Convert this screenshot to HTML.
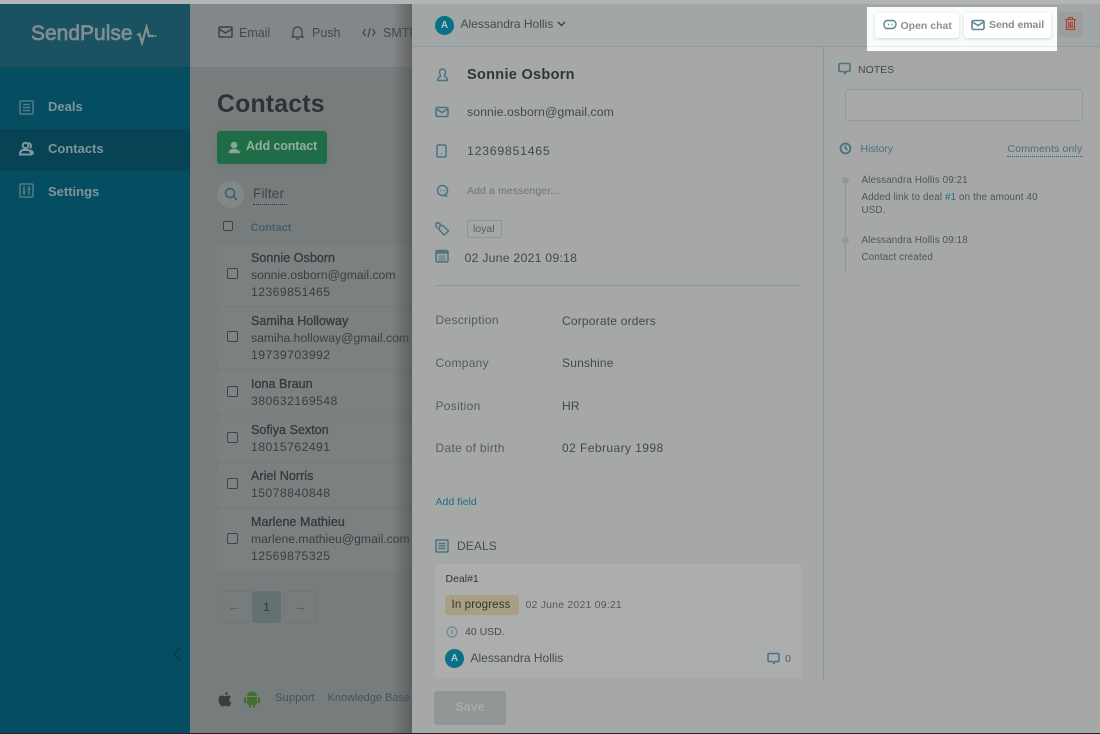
<!DOCTYPE html>
<html><head><meta charset="utf-8"><style>
html,body{margin:0;padding:0;width:1100px;height:734px;overflow:hidden;background:#b4b4b4}
body{position:relative;font-family:"Liberation Sans",sans-serif;color:#3f4344}
div,svg{position:absolute}
.t{position:absolute;white-space:nowrap;line-height:20px;height:20px;font-size:12px}
svg{fill:none;stroke:#44707f;stroke-width:1.5}
.row{left:217px;width:195px;background:#7c8080;border-radius:4px}
.cb{position:absolute;left:227px;width:9px;height:9px;border:1px solid #3c4446;border-radius:2px;background:#7e8383}
.rt{left:251px;font-size:12.2px;color:#393e40;letter-spacing:0}
.rd{letter-spacing:.45px}
.rn{font-size:12.5px;color:#34393b;-webkit-text-stroke:.3px #34393b;letter-spacing:.05px}
.side{left:48px;font-size:13px;font-weight:bold;color:#7f959b}
.lab{left:435.500px;font-size:12px;color:#565a5b;letter-spacing:.3px}
.val{left:562px;font-size:12px;color:#44484a;letter-spacing:.2px}
.hist{font-size:9.800px;color:#505455;letter-spacing:.15px}
.av{border-radius:50%;background:#0a7086;color:#b0c6cb;font-weight:bold;font-size:10px;text-align:center;width:19px;height:19px;line-height:19px}
.btn{background:#fff;border-radius:3px;box-shadow:0 1px 3px rgba(120,140,140,.35)}
</style></head><body>
<div style="left:0;top:4px;width:190px;height:729px;background:#054d60"></div>
<div style="left:0;top:4px;width:190px;height:63px;background:#1a5262"></div>
<div style="left:0;top:129px;width:190px;height:42px;background:#064355"></div>
<div class="t" style="left:31px;top:22px;height:24px;line-height:24px;font-size:21px;color:#7f8f92;-webkit-text-stroke:.7px #7f8f92">SendPulse</div>
<svg style="left:136px;top:24px;stroke:#7f8f92;stroke-width:2.200" width="22" height="22" viewBox="0 0 22 22"><path d="M1 11l2.500-1 2.500 9 4.500-16 2.500 9h5"/><circle cx="19.500" cy="12" r="1" fill="#7f8f92" stroke="none"/></svg>

<svg style="left:19px;top:100px;stroke:#557b87" width="15" height="15" viewBox="0 0 15 15"><rect x="1" y="1" width="13" height="13" rx="1"/><path d="M4 4.500h7M4 7.500h7M4 10.500h7"/></svg>
<div class="t side" style="top:97px">Deals</div>
<svg style="left:19px;top:141px;stroke:#82989e;stroke-width:2" width="15" height="15" viewBox="0 0 15 15"><circle cx="6.500" cy="4.500" r="2.800"/><path d="M1 13.500c0-2.500 1-4 2.500-4.500h6c1.500.5 2.500 2 2.500 4.500zM9.500 2a3 3 0 0 1 2.500 3c0 1-.5 2-1 2.500M12 9.500c1.300.5 2 2 2 4"/></svg>
<div class="t side" style="top:139px">Contacts</div>
<svg style="left:19px;top:183px;stroke:#557b87" width="15" height="15" viewBox="0 0 15 15"><rect x="1" y="1" width="13" height="13" rx="1"/><path d="M5 3v9M10 3v9M3.500 9h3M8.500 6h3"/></svg>
<div class="t side" style="top:182px">Settings</div>
<svg style="left:171px;top:647px;stroke:#05394a;stroke-width:1.200" width="12" height="14" viewBox="0 0 12 14"><path d="M9 1L3 7l6 6"/></svg>

<div style="left:190px;top:4px;width:222px;height:729px;background:#777d7d"></div>
<div style="left:190px;top:4px;width:222px;height:63px;background:#84878a"></div>

<svg style="left:218px;top:26px;stroke:#3c4244" width="15" height="13" viewBox="0 0 15 13"><rect x="1" y="1" width="13" height="10" rx="1"/><path d="M1 3l6.500 4L14 3"/></svg>
<div class="t" style="left:239px;top:22.500px;font-size:12.500px;color:#45494b">Email</div>
<svg style="left:291px;top:25px;stroke:#3c4244;stroke-width:1.200" width="13" height="15" viewBox="0 0 13 15"><path d="M2 11V7c0-3 2-5 4.500-5S11 4 11 7v4l1 1H1zM5 14h3"/></svg>
<div class="t" style="left:312px;top:22.500px;font-size:12.500px;color:#45494b">Push</div>
<svg style="left:362px;top:27px;stroke:#3c4244;stroke-width:1.200" width="14" height="11" viewBox="0 0 14 11"><path d="M3.500 2L1 5.500 3.500 9M10.500 2L13 5.500 10.500 9M8 1L6 10"/></svg>
<div class="t" style="left:383px;top:22.500px;font-size:12.500px;color:#45494b;width:29px;overflow:hidden">SMTP</div>

<div class="t" style="left:217px;top:91px;height:28px;line-height:28px;font-size:24.800px;font-weight:bold;color:#2e3234;letter-spacing:.2px">Contacts</div>
<div style="left:217px;top:131px;width:110px;height:33px;background:#1f6c47;border-radius:3px;box-shadow:0 2px 8px rgba(80,110,100,.3)"></div>
<svg style="left:228px;top:141px;fill:#86a897;stroke:#86a897;stroke-width:.6" width="14" height="14" viewBox="0 0 14 14"><circle cx="6" cy="4" r="3"/><path d="M1 12c0-3 2-4 5-4s4 1 5 4z"/><path d="M9 11h4M11 9v4"/></svg>
<div class="t" style="left:246px;top:136px;font-size:12.500px;font-weight:bold;color:#93b0a1;letter-spacing:-.1px">Add contact</div>
<div style="left:217px;top:181px;width:27px;height:27px;border-radius:50%;background:#828787"></div>
<svg style="left:224px;top:187px;stroke:#3c5f6d;stroke-width:1.600" width="14" height="14" viewBox="0 0 14 14"><circle cx="6" cy="6" r="4.500"/><path d="M9.500 9.500L13 13"/></svg>
<div class="t" style="left:253px;top:184px;font-size:13.500px;color:#3f4446;letter-spacing:.2px">Filter</div>
<div style="left:253px;top:204px;width:34px;border-top:1px dotted #2e3c40"></div>
<div class="cb" style="left:223px;top:221px;width:8px;height:8px;background:#7d8282"></div>
<div class="t" style="left:250.500px;top:218px;font-size:11px;font-weight:bold;color:#44606b">Contact</div>

<div class="row" style="top:245px;height:61px"></div>
<div class="row" style="top:308px;height:61px"></div>
<div class="row" style="top:371px;height:44px"></div>
<div class="row" style="top:417px;height:44px"></div>
<div class="row" style="top:463px;height:44px"></div>
<div class="row" style="top:509px;height:62px"></div>
<div class="cb" style="top:268px"></div><div class="cb" style="top:331px"></div><div class="cb" style="top:386px"></div><div class="cb" style="top:432px"></div><div class="cb" style="top:478px"></div><div class="cb" style="top:533px"></div>
<div class="t rt rn" style="top:248px">Sonnie Osborn</div>
<div class="t rt" style="top:265px">sonnie.osborn@gmail.com</div>
<div class="t rt rd" style="top:282px">12369851465</div>
<div class="t rt rn" style="top:311px">Samiha Holloway</div>
<div class="t rt" style="top:328px;width:161px;overflow:hidden">samiha.holloway@gmail.com</div>
<div class="t rt rd" style="top:345px">19739703992</div>
<div class="t rt rn" style="top:374px">Iona Braun</div>
<div class="t rt rd" style="top:391px">380632169548</div>
<div class="t rt rn" style="top:420px">Sofiya Sexton</div>
<div class="t rt rd" style="top:437px">18015762491</div>
<div class="t rt rn" style="top:466px">Ariel Norris</div>
<div class="t rt rd" style="top:483px">15078840848</div>
<div class="t rt rn" style="top:512px">Marlene Mathieu</div>
<div class="t rt" style="top:529px;width:161px;overflow:hidden">marlene.mathieu@gmail.com</div>
<div class="t rt rd" style="top:546px">12569875325</div>
<div style="left:392px;top:4px;width:20px;height:729px;background:linear-gradient(90deg,rgba(70,70,70,0),rgba(70,70,70,.55))"></div>

<div style="left:218px;top:591px;width:30px;height:30px;border:1px solid #717777;border-radius:3px"></div>
<div class="t" style="left:218px;top:596px;width:32px;text-align:center;font-size:14px;color:#545959">←</div>
<div style="left:252px;top:591px;width:29px;height:32px;background:#647071;border-radius:3px"></div>
<div class="t" style="left:252px;top:597px;width:29px;text-align:center;font-size:12px;color:#35393b">1</div>
<div style="left:284px;top:591px;width:31px;height:30px;border:1px solid #717777;border-radius:3px"></div>
<div class="t" style="left:284px;top:596px;width:33px;text-align:center;font-size:14px;color:#545959">→</div>

<svg style="left:218px;top:691px;fill:#3b3d3f;stroke:none" width="14" height="16" viewBox="0 0 14 16"><path d="M10 1c0 2-1.500 3-3 3 0-2 1.500-3 3-3zM3.800 4.500c1.300 0 2.200.8 3.200.8s1.800-.8 3.200-.8c1 0 2 .5 2.700 1.500-2.300 1.400-2 4.700.5 5.700-.7 1.800-2 3.800-3.300 3.800-1 0-1.500-.6-2.800-.6s-1.800.6-2.800.6C2.700 15.500.500 12 .500 9c0-3 1.500-4.500 3.300-4.500z"/></svg>
<svg style="left:244px;top:690px;fill:#44702f;stroke:none" width="16" height="18" viewBox="0 0 16 18"><path d="M3 6a5 4.500 0 0 1 10 0zM3 7h10v7a1 1 0 0 1-1 1h-1v2.500H9V15H7v2.500H5V15H4a1 1 0 0 1-1-1z"/><rect x="0" y="7" width="2.200" height="6.500" rx="1"/><rect x="13.800" y="7" width="2.200" height="6.500" rx="1"/></svg>
<div class="t" style="left:275px;top:688px;font-size:11.300px;color:#44525a">Support</div>
<div class="t" style="left:327.500px;top:688px;font-size:11px;color:#44525a;width:84px;overflow:hidden">Knowledge Base</div>

<!-- panel -->
<div style="left:412px;top:4px;width:688px;height:729px;background:#a5a8a7"></div>
<div style="left:412px;top:4px;width:688px;height:42px;background:#a1a6a6;border-bottom:1px solid #8b9a9a"></div>
<div style="left:823px;top:47px;width:1px;height:634px;background:#8e9494"></div>
<div class="av" style="left:435px;top:16px">A</div>
<div class="t" style="left:460.500px;top:14px;font-size:12px;color:#474b4d">Alessandra Hollis</div>
<svg style="left:557px;top:21px;stroke:#3f4648" width="9" height="6" viewBox="0 0 9 6"><path d="M1 1l3.500 3.500L8 1"/></svg>

<!-- highlighted -->
<div style="left:867px;top:7px;width:190px;height:44px;background:#fafcfc"></div>
<div style="left:867px;top:46px;width:190px;height:1px;background:#e3ecec"></div>
<div class="btn" style="left:875px;top:13px;width:84px;height:25px"></div>
<div class="btn" style="left:964px;top:13px;width:87px;height:25px"></div>
<svg style="left:883px;top:19px;stroke:#5c8492;stroke-width:1.400" width="14" height="12" viewBox="0 0 14 12"><path d="M4 1.500h6a3.500 3.500 0 0 1 3 3.500c0 2.500-1.500 4-3.500 4.500H5.500L3 9.500C1.500 8.500 1 7 1 5c0-2 1.500-3.500 3-3.500z"/><path d="M5 5.500h1M8.500 5.500h1"/></svg>
<div class="t" style="left:900.500px;top:15.500px;font-size:10.500px;font-weight:bold;color:#8a9194">Open chat</div>
<svg style="left:971px;top:19px;stroke:#5c8492;stroke-width:1.600" width="14" height="12" viewBox="0 0 14 12"><rect x="1" y="1.500" width="12" height="9" rx="1.500"/><path d="M1.500 3l5.500 3.500L12.500 3"/></svg>
<div class="t" style="left:989px;top:15px;font-size:10.500px;font-weight:bold;color:#868d90;letter-spacing:-.03px">Send email</div>
<div style="left:1058px;top:12px;width:25px;height:25px;background:#9c9e9e;border-radius:3px"></div>
<svg style="left:1064px;top:16px;stroke:#ab3f2b;stroke-width:1.100" width="13" height="15" viewBox="0 0 13 15"><path d="M1 3.500h11M4.500 3.500V1.500h4v2M2.500 3.500v10h8v-10M4.800 5.500v6.500M6.500 5.500v6.500M8.200 5.500v6.500"/></svg>

<!-- contact -->
<svg style="left:436px;top:68px;stroke:#4a7282;stroke-width:1.500" width="13" height="14" viewBox="0 0 13 14"><path d="M6.500 1a3 3 0 0 1 3 3c0 2-1 3-1 4s3 1 3 4.500H1.500C1.500 9 4.500 9 4.500 8s-1-2-1-4a3 3 0 0 1 3-3z"/></svg>
<div class="t" style="left:467px;top:64.500px;font-size:14.500px;font-weight:bold;color:#313537;letter-spacing:.3px">Sonnie Osborn</div>
<svg style="left:435px;top:106px;stroke:#4a7282;stroke-width:1.600" width="14" height="12" viewBox="0 0 14 12"><rect x="1" y="1.500" width="12" height="9" rx="1.500"/><path d="M1.500 3l5.500 3.500L12.500 3"/></svg>
<div class="t" style="left:467px;top:101.500px;font-size:12.300px;color:#44484a;letter-spacing:.05px">sonnie.osborn@gmail.com</div>
<svg style="left:436px;top:144px;stroke:#4a7282;stroke-width:1.500" width="12" height="14" viewBox="0 0 12 14"><rect x="1" y="1" width="9" height="12" rx="1.500"/><path d="M5 10h1"/></svg>
<div class="t" style="left:467px;top:140.500px;font-size:12.300px;color:#44484a;letter-spacing:.75px">12369851465</div>
<svg style="left:436px;top:184px;stroke:#4a7282;stroke-width:1.500" width="13" height="14" viewBox="0 0 13 14"><circle cx="6.500" cy="6.500" r="5"/><path d="M4.300 6.500h1M7.700 6.500h1M8.500 11.500l3 1"/></svg>
<div class="t" style="left:467px;top:181px;font-size:10.500px;color:#707475;letter-spacing:.1px">Add a messenger...</div>
<svg style="left:435px;top:222px;stroke:#4a7282;stroke-width:1.400" width="15" height="14" viewBox="0 0 15 14"><path d="M5 3.500h3l5.500 5.500-4.500 4-5-5.500zM1 1h3.500l1.500 2.500M1 1v3.500l2 2"/></svg>
<div style="left:467px;top:220px;width:33px;height:16px;border:1px solid #8b9696;border-radius:2px"></div>
<div class="t" style="left:473px;top:219px;font-size:10.500px;color:#5a5e5f">loyal</div>
<svg style="left:435px;top:249px;stroke:#4a7282;stroke-width:1.500" width="14" height="14" viewBox="0 0 14 14"><rect x="1" y="1.500" width="12" height="11.500" rx="1.500"/><path d="M1 3.500h12" stroke-width="2.500"/><path d="M3.500 7h7M3.500 9h7M3.500 11h7" stroke-width="1"/></svg>
<div class="t" style="left:464.500px;top:247.500px;font-size:12.300px;color:#44484a;letter-spacing:.22px">02 June 2021 09:18</div>
<div style="left:435px;top:285px;width:367px;height:1px;background:#909898"></div>

<div class="t lab" style="top:309.500px">Description</div><div class="t val" style="top:310.500px">Corporate orders</div>
<div class="t lab" style="top:352.500px">Company</div><div class="t val" style="top:352.500px">Sunshine</div>
<div class="t lab" style="top:395.500px">Position</div><div class="t val" style="top:395.500px">HR</div>
<div class="t lab" style="top:437.500px">Date of birth</div><div class="t val" style="top:437.500px;letter-spacing:.43px">02 February 1998</div>
<div class="t" style="left:435.500px;top:492px;font-size:10.500px;color:#1a7085;letter-spacing:.05px">Add field</div>

<svg style="left:435px;top:539px;stroke:#4a7282;stroke-width:1.500" width="14" height="14" viewBox="0 0 14 14"><rect x="1" y="1" width="12" height="12" rx="1"/><path d="M3.500 4.500h7M3.500 7h7M3.500 9.500h7"/></svg>
<div class="t" style="left:457px;top:535.500px;font-size:12px;color:#4a4e50;letter-spacing:.1px">DEALS</div>
<div style="left:435px;top:564px;width:367px;height:114px;background:#acadad;border-radius:3px"></div>
<div class="t" style="left:445.500px;top:569px;font-size:10.500px;color:#303436">Deal#1</div>
<div style="left:445px;top:595px;width:74px;height:20px;background:#a99f82;border-radius:3px"></div>
<div class="t" style="left:451.500px;top:595px;font-size:11.500px;color:#353432;letter-spacing:.13px">In progress</div>
<div class="t" style="left:525.500px;top:595px;font-size:10.500px;color:#55595a;letter-spacing:.2px">02 June 2021 09:21</div>
<svg style="left:446px;top:626px;stroke:#6d8a96;stroke-width:1.200" width="12" height="12" viewBox="0 0 12 12"><circle cx="6" cy="6" r="5"/><path d="M6 3.500v5"/></svg>
<div class="t" style="left:465px;top:622px;font-size:10.500px;color:#484c4e">40 USD.</div>
<div class="av" style="left:445px;top:649px">A</div>
<div class="t" style="left:470.500px;top:648px;font-size:12px;color:#474b4d">Alessandra Hollis</div>
<svg style="left:767px;top:652px;stroke:#4a7282;stroke-width:1.500" width="13" height="14" viewBox="0 0 13 14"><path d="M2 1.500h9a1 1 0 0 1 1 1v6a1 1 0 0 1-1 1H8l-1 2-1.500-2H2a1 1 0 0 1-1-1v-6a1 1 0 0 1 1-1z"/></svg>
<div class="t" style="left:785px;top:649px;font-size:10.500px;color:#55595a">0</div>
<div style="left:434px;top:691px;width:72px;height:34px;background:#939697;border-radius:3px"></div>
<div class="t" style="left:434px;top:696.500px;width:72px;text-align:center;font-size:12.500px;font-weight:bold;color:#a9abab">Save</div>

<!-- notes -->
<svg style="left:838px;top:62px;stroke:#4a7282;stroke-width:1.600" width="13" height="14" viewBox="0 0 13 14"><path d="M2 1.500h9a1 1 0 0 1 1 1v6a1 1 0 0 1-1 1H8l-1 2-1.500-2H2a1 1 0 0 1-1-1v-6a1 1 0 0 1 1-1z"/></svg>
<div class="t" style="left:858px;top:60px;font-size:10.500px;color:#45494b">NOTES</div>
<div style="left:845px;top:89px;width:236px;height:30px;background:#a9a9a9;border:1px solid #8b9c9c;border-radius:3px"></div>
<svg style="left:839px;top:142px;stroke:#45707f;stroke-width:1.700" width="13" height="13" viewBox="0 0 13 13"><circle cx="6.500" cy="6.500" r="5"/><path d="M6.500 3.500v3l2 1.500"/></svg>
<div class="t" style="left:860.500px;top:139px;font-size:10.500px;color:#4d6e7b">History</div>
<div class="t" style="left:1007.500px;top:139px;font-size:10.500px;color:#4d6e7b;letter-spacing:.15px">Comments only</div>
<div style="left:1007px;top:156px;width:76px;border-top:1px dotted #2e5e6c"></div>
<div style="left:845px;top:180px;width:1px;height:92px;background:#8c9696"></div>
<div style="left:842px;top:177px;width:7px;height:7px;border-radius:50%;background:#909a9a"></div>
<div style="left:842px;top:237px;width:7px;height:7px;border-radius:50%;background:#909a9a"></div>
<div class="t hist" style="left:861.500px;top:171px">Alessandra Hollis 09:21</div>
<div class="t hist" style="left:861.500px;top:188px">Added link to deal <span style="color:#1a7085">#1</span> on the amount 40</div>
<div class="t hist" style="left:861.500px;top:201px">USD.</div>
<div class="t hist" style="left:861.500px;top:231px">Alessandra Hollis 09:18</div>
<div class="t hist" style="left:861.500px;top:248px">Contact created</div>

<div style="left:0;top:733px;width:1100px;height:1px;background:#222"></div>
</body></html>
